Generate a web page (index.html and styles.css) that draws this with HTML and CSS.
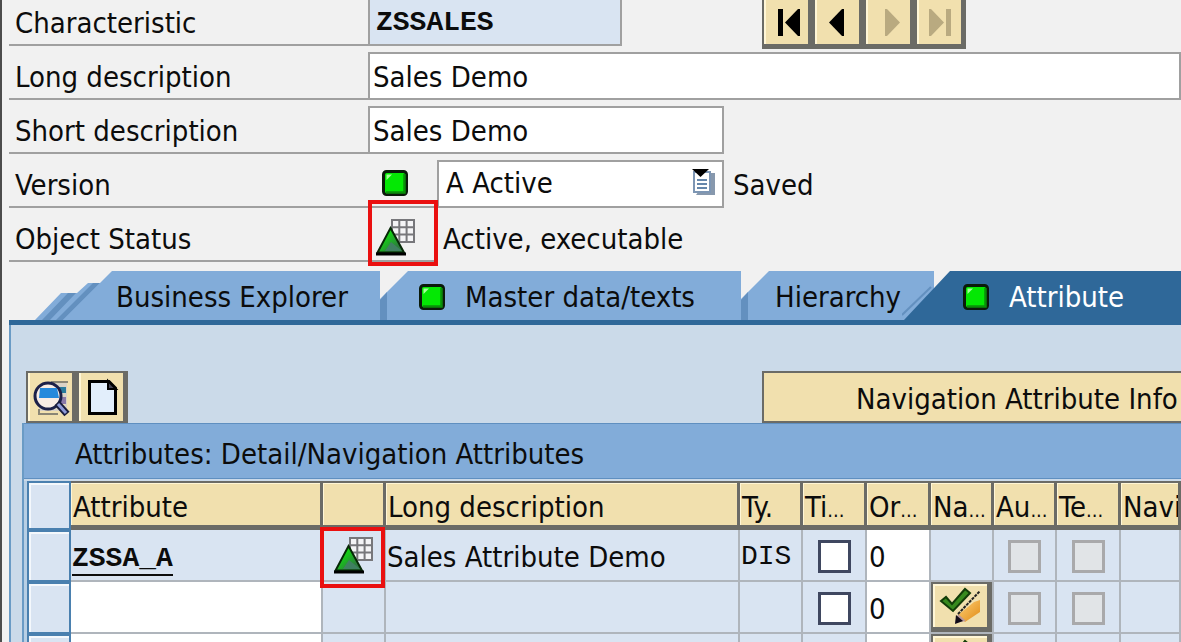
FILE: index.html
```html
<!DOCTYPE html>
<html lang="en">
<head>
<meta charset="utf-8">
<title>Characteristic ZSSALES</title>
<link rel="stylesheet" href="styles.css">
</head>
<body>
<svg class="defs" width="0" height="0" aria-hidden="true">
  <defs>
    <linearGradient id="green" x1="0" y1="0" x2="1" y2="1">
      <stop offset="0.3" stop-color="#12d812"/><stop offset="0.75" stop-color="#2c7d3c"/>
    </linearGradient>
    <linearGradient id="wood" x1="0" y1="0" x2="1" y2="1">
      <stop offset="0" stop-color="#ffd27a"/><stop offset="1" stop-color="#e08a14"/>
    </linearGradient>
    <symbol id="led" viewBox="0 0 26 26">
      <rect x="1.5" y="1.5" width="23" height="23" rx="3" fill="#04e804" stroke="#0a1a0a" stroke-width="3"/>
      <path d="M4 22.500H22.500V4" fill="none" stroke="#0a8f0a" stroke-width="2.500"/>
      <path d="M4.500 10V4.500H10z" fill="#a8ff9c"/>
    </symbol>
    <symbol id="status" viewBox="0 0 40 38">
      <path d="M16 2H38V24H16zM23.300 2V24M30.600 2V24M16 9.300H38M16 16.600H38" fill="#f4f4f6" stroke="#77777b" stroke-width="2"/>
      <path d="M14.500 10L28 34.500H1.500z" fill="url(#green)" stroke="#062806" stroke-width="2"/>
      <path d="M0 36H30" stroke="#000" stroke-width="3"/>
      <path d="M15 24L26 33H9z" fill="#3f8060"/>
    </symbol>
    <symbol id="approve" viewBox="0 0 42 38">
      <path d="M2 14l5-4 6 7L26 2l5 4L14 24z" fill="#378a1d" stroke="#123c08" stroke-width="2"/>
      <path d="M19 28L35 15l6-2v12L26 35z" fill="url(#wood)"/>
      <path d="M16 36l3-9 8 7z" fill="#b99"/>
      <path d="M19 27L41 4" stroke="#222" stroke-width="2" stroke-dasharray="3 1"/>
      <path d="M16 37l1-9 7 6z" fill="#100a18"/>
    </symbol>
  </defs>
</svg>
<main class="page">
  <form class="form">
    <div class="row row-first">
      <label class="label" for="char">Characteristic</label>
      <div class="field">
        <input class="input input-key" id="char" value="ZSSALES" readonly>
        <div class="nav">
          <button class="tool" type="button" aria-label="First"><svg width="44" height="36" viewBox="0 0 44 36"><path d="M14 5h5v27h-5zM36 5v27h-2L21 18.500 34 5z"/></svg></button>
          <button class="tool" type="button" aria-label="Previous"><svg width="44" height="36" viewBox="0 0 44 36"><path d="M29 5v27h-2L14 18.500 27 5z"/></svg></button>
          <button class="tool" type="button" aria-label="Next" disabled><svg width="44" height="36" viewBox="0 0 44 36"><path d="M19 5v27h2l13-13.500L21 5z"/></svg></button>
          <button class="tool" type="button" aria-label="Last" disabled><svg width="44" height="36" viewBox="0 0 44 36"><path d="M12 5v27h2l13-13.500L14 5zM29 5h5v27h-5z"/></svg></button>
        </div>
      </div>
    </div>
    <div class="row">
      <label class="label" for="long">Long description</label>
      <div class="field"><input class="input input-long" id="long" value="Sales Demo"></div>
    </div>
    <div class="row">
      <label class="label" for="short">Short description</label>
      <div class="field"><input class="input input-short" id="short" value="Sales Demo"></div>
    </div>
    <div class="row">
      <label class="label" for="version">Version</label>
      <div class="field">
        <div class="state"><svg class="led"><use href="#led"/></svg></div>
        <div class="picker">
          <select class="input select" id="version"><option>A Active</option></select>
          <svg class="picker-icon" width="24" height="28" viewBox="0 0 24 28">
            <path d="M5 27H24V5H20" fill="#8798ad"/>
            <path d="M3 4H19V24H3z" fill="#fff" stroke="#7d96b4" stroke-width="2"/>
            <path d="M6 12H16M6 16H16M6 20H16" stroke="#6687ab" stroke-width="2"/>
            <path d="M1 1H18L9.500 9z"/>
          </svg>
        </div>
        <span class="note">Saved</span>
      </div>
    </div>
    <div class="row">
      <span class="label">Object Status</span>
      <div class="field">
        <div class="state state-marked"><svg class="status"><use href="#status"/></svg></div>
        <span class="note">Active, executable</span>
      </div>
    </div>
  </form>

  <nav class="tabs">
    <svg class="edge" width="77" height="49" viewBox="0 0 77 49">
      <path d="M0 49L26 22H42L53 12H68L77 4V49z" fill="#82acd9"/>
      <path d="M7 49L33 22H41L15 49zM21 49L58 12H65L28 49z" fill="#6390bf"/>
      <path d="M28 49L77 0V49z" fill="#82acd9"/>
    </svg>
    <button class="tab" type="button">Business Explorer</button>
    <svg class="edge" width="28" height="49" viewBox="0 0 28 49"><path d="M0 28L28 0V49H0z" fill="#82acd9"/><path d="M0 29L7 21V49H0z" fill="#6390bf"/></svg>
    <button class="tab tab-led tab-master" type="button"><svg class="led"><use href="#led"/></svg>Master data/texts</button>
    <svg class="edge" width="28" height="49" viewBox="0 0 28 49"><path d="M0 28L28 0V49H0z" fill="#82acd9"/><path d="M0 29L7 21V49H0z" fill="#6390bf"/></svg>
    <button class="tab tab-plain" type="button">Hierarchy</button>
    <svg class="edge" width="48" height="49" viewBox="0 0 48 49"><path d="M0 0H32V49H0z" fill="#82acd9"/><path d="M0 44L29 16" stroke="#6390bf" stroke-width="2"/><path d="M2 49L48 0V49z" fill="#2f6899"/></svg>
    <button class="tab tab-led tab-active" type="button"><svg class="led"><use href="#led"/></svg>Attribute</button>
  </nav>

  <section class="panel">
    <div class="toolbar">
      <button class="tool tool-full" type="button" aria-label="Display details">
        <svg width="42" height="40" viewBox="0 0 42 40">
          <path d="M20 6h18v28H10V28h26z" fill="#d9d2c6"/>
          <path d="M28 10h9v6h-9z" fill="#287a9c"/><path d="M30 20h7v7h-7z" fill="#8a7aa8"/>
          <path d="M10 32v5h19M22 5h17" fill="none" stroke="#8a8676" stroke-width="2"/>
          <circle cx="19" cy="19" r="13" fill="#f8ece4" stroke="#1c2048" stroke-width="3"/>
          <path d="M11 11H28l2 10H10z" fill="#2589dc"/>
          <path d="M28 26l10 11" stroke="#191c3c" stroke-width="7"/><path d="M29 27l8 9" stroke="#8f9bd8" stroke-width="3"/>
        </svg>
      </button>
      <button class="tool tool-full" type="button" aria-label="Create">
        <svg width="42" height="40" viewBox="0 0 42 40">
          <path d="M9.500 4.500H29L35.500 11V36.500H9.500z" fill="#e2eefb" stroke="#000" stroke-width="3"/>
          <path d="M28 4v8h8z" fill="#445" stroke="#000" stroke-width="2"/>
        </svg>
      </button>
      <button class="info" type="button">Navigation Attribute Info</button>
    </div>
    <div class="grid">
      <h2 class="title">Attributes: Detail/Navigation Attributes</h2>
      <table class="table">
        <colgroup><col class="c-sel"><col class="c-attr"><col class="c-s"><col class="c-long"><col class="c-s"><col class="c-m"><col class="c-m"><col class="c-s"><col class="c-s"><col class="c-m"><col></colgroup>
        <thead>
          <tr>
            <td class="sel"></td><th>Attribute</th><th></th><th>Long description</th><th>Ty.</th>
            <th>Ti<span class="dots">...</span></th><th>Or<span class="dots">...</span></th><th>Na<span class="dots">...</span></th><th>Au<span class="dots">...</span></th><th>Te<span class="dots">...</span></th><th>Navig</th>
          </tr>
        </thead>
        <tbody>
          <tr>
            <td class="sel"></td>
            <td><a class="key" href="#attribute">ZSSA_A</a></td>
            <td class="marked"><svg class="status"><use href="#status"/></svg></td>
            <td>Sales Attribute Demo</td>
            <td class="mono">DIS</td>
            <td class="mid"><input class="check" type="checkbox" aria-label="Time dependent"></td>
            <td class="white zero">0</td>
            <td></td>
            <td class="mid"><input class="check" type="checkbox" aria-label="Authorization" disabled></td>
            <td class="mid"><input class="check" type="checkbox" aria-label="Text" disabled></td>
            <td></td>
          </tr>
          <tr>
            <td class="sel"></td><td class="white"></td><td></td><td></td><td></td>
            <td class="mid"><input class="check" type="checkbox" aria-label="Time dependent"></td>
            <td class="white zero">0</td>
            <td class="fill"><button class="switch" type="button" aria-label="Navigation on/off"><svg width="42" height="38"><use href="#approve"/></svg></button></td>
            <td class="mid"><input class="check" type="checkbox" aria-label="Authorization" disabled></td>
            <td class="mid"><input class="check" type="checkbox" aria-label="Text" disabled></td>
            <td></td>
          </tr>
          <tr>
            <td class="sel"></td><td class="white"></td><td></td><td></td><td></td>
            <td class="mid"><input class="check" type="checkbox" aria-label="Time dependent"></td>
            <td class="white"></td>
            <td class="fill"><button class="switch" type="button" aria-label="Navigation on/off"><svg width="42" height="38"><use href="#approve"/></svg></button></td>
            <td class="mid"><input class="check" type="checkbox" aria-label="Authorization" disabled></td>
            <td class="mid"><input class="check" type="checkbox" aria-label="Text" disabled></td>
            <td></td>
          </tr>
        </tbody>
      </table>
    </div>
  </section>
</main>
</body>
</html>
```
FILE: styles.css
```css
* { box-sizing: border-box; }

body {
  margin: 0;
  height: 100vh;
  overflow: hidden;
  background: #f1f1f1;
  color: #0c0c0c;
  font: 29px/32px "DejaVu Sans Condensed", Tahoma, sans-serif;
}

button, input, select { font: inherit; color: inherit; border-radius: 0; }
button { padding: 0; cursor: pointer; white-space: nowrap; }
svg { display: block; flex: none; }

.defs { position: absolute; }
.led { width: 26px; height: 26px; }
.status { width: 40px; height: 38px; }

.page {
  height: 100vh;
  overflow: hidden;
  border-left: 2px solid #4c4c4c;
  padding-left: 7px;
}

/* Header form */
.row {
  display: grid;
  grid-template-columns: 359px 1fr;
  align-items: end;
  height: 54px;
}
.row-first { height: 46px; }

.label {
  padding: 0 0 5px 6px;
  border-bottom: 2px solid #a0a0a0;
}

.field { display: flex; align-items: flex-end; }

.input {
  height: 48px;
  padding: 1px 3px 0;
  border: 2px solid #a0a0a0;
  background: #fff;
  outline: 0;
}
.input-key {
  width: 254px;
  height: 46px;
  padding: 0 6px;
  border-top: 0;
  background: #d9e4f2;
  font: bold 28px/32px "Courier New", "Liberation Mono", monospace;
}
.input-long { width: 100%; }
.input-short { width: 356px; }

.nav {
  display: flex;
  margin: 0 0 -3px 140px;
}

.tool {
  display: flex;
  align-items: center;
  justify-content: center;
  width: 51px;
  height: 49px;
  border: solid #6b6b66;
  border-width: 0 5px 5px 2px;
  background: #f1e0ae;
  box-shadow: inset 2px 0 #fff6d6;
  overflow: hidden;
}
.tool:disabled svg { fill: #b9aa80; }
.tool-full { height: 52px; border-width: 2px 5px 2px 2px; }

.state {
  position: relative;
  display: flex;
  align-items: center;
  width: 69px;
  height: 48px;
  padding-left: 14px;
  border-bottom: 2px solid #a0a0a0;
}
.state-marked { padding-left: 8px; }
.state-marked::after {
  content: "";
  position: absolute;
  inset: -14px -1px -6px 0;
  border: 4px solid #ea1010;
}

.picker { position: relative; width: 287px; }
.select { width: 100%; padding: 0 7px 2px; appearance: none; }
.picker-icon { position: absolute; right: 9px; top: 8px; pointer-events: none; }

.note { padding: 0 0 7px 9px; }
.state-marked + .note { padding-left: 6px; }

/* Tab strip */
.tabs {
  display: flex;
  height: 63px;
  padding: 9px 0 0 26px;
  border-bottom: 5px solid #2f6899;
  align-items: flex-end;
}
.tab {
  display: flex;
  align-items: center;
  height: 49px;
  padding: 2px 0 0;
  border: 0;
  background: #82acd9;
  text-align: left;
}
.tab:first-of-type { width: 268px; padding-left: 4px; }
.tab-led { gap: 20px; padding-left: 11px; }
.tab-master { width: 333px; }
.tab-plain { position: relative; width: 133px; padding-left: 6px; }
.tab-active { flex: 1; padding-left: 13px; background: #2f6899; color: #fff; }

/* Attribute panel */
.panel {
  padding: 46px 0 0 11px;
  border-left: 2px solid #6a9bc5;
  background: #cbdae9;
}
.toolbar { display: flex; padding-left: 4px; overflow: hidden; }
.info {
  flex: 1;
  min-width: 0;
  height: 52px;
  margin-left: 634px;
  padding: 4px 0 0 92px;
  border: 2px solid #6b6b66;
  border-right: 0;
  background: #f1e0ae;
  text-align: left;
  overflow: hidden;
}

.grid { border-left: 2px solid #6a9bc5; }
.title {
  margin: 0 0 2px;
  padding: 14px 0 8px 51px;
  border: solid #5f8fc0;
  border-width: 1px 0;
  background: #82acd9;
  font: inherit;
}

.table {
  width: 100%;
  padding-left: 3px;
  table-layout: fixed;
  border-spacing: 0;
  background: #b8cfe4;
}
.c-sel { width: 44px; }
.c-attr { width: 252px; }
.c-long { width: 354px; }
.c-s { width: 63px; }
.c-m { width: 64px; }

.table th, .table td {
  padding: 4px 0 0 1px;
  text-align: left;
  font-weight: normal;
  white-space: nowrap;
  overflow: hidden;
}
.table th {
  height: 49px;
  padding: 6px 0 0 2px;
  border: solid #6b6b66;
  border-width: 2px 3px 5px 0;
  background: #f1e0ae;
  box-shadow: inset 1px 1px #fff6d6;
}
.table td {
  height: 52px;
  border: solid #afb5bc;
  border-width: 0 2px 2px 0;
  background: #d9e4f2;
}
.table .sel {
  border: 2px solid #4a80af;
  background: #d9e4f2;
  box-shadow: inset 2px 2px #f4f8fc;
}
.table thead .sel { height: 49px; }
.table .white { background: #fff; }
.table .mid { padding: 2px 0 0; }
.table .mono { font: 28px/32px "Courier New", "Liberation Mono", monospace; }
.table .zero { padding-left: 2px; }
.table .marked { position: relative; padding: 0 0 0 11px; overflow: visible; }
.table .fill { padding: 0; }
.marked::after {
  content: "";
  position: absolute;
  inset: -3px -1px -8px -3px;
  border: 4px solid #ea1010;
}

.dots { font-size: 20px; line-height: 1; }
.key {
  font: bold 28px/30px "Courier New", "Liberation Mono", monospace;
  color: #0c0c0c;
  text-decoration: none;
  border-bottom: 2px solid #0c0c0c;
}

.check {
  display: block;
  width: 33px;
  height: 33px;
  margin: 0 auto;
  appearance: none;
  border: 3px solid #3f4760;
  background: #fff;
}
.check:disabled {
  border-color: #a9a9ab;
  background: #e1e4e7;
}

.switch {
  display: flex;
  align-items: center;
  justify-content: center;
  width: 61px;
  height: 50px;
  border: solid #6b6b66;
  border-width: 2px 5px 5px 2px;
  background: #f1e0ae;
  box-shadow: inset 2px 2px #fff6d6;
}
```
